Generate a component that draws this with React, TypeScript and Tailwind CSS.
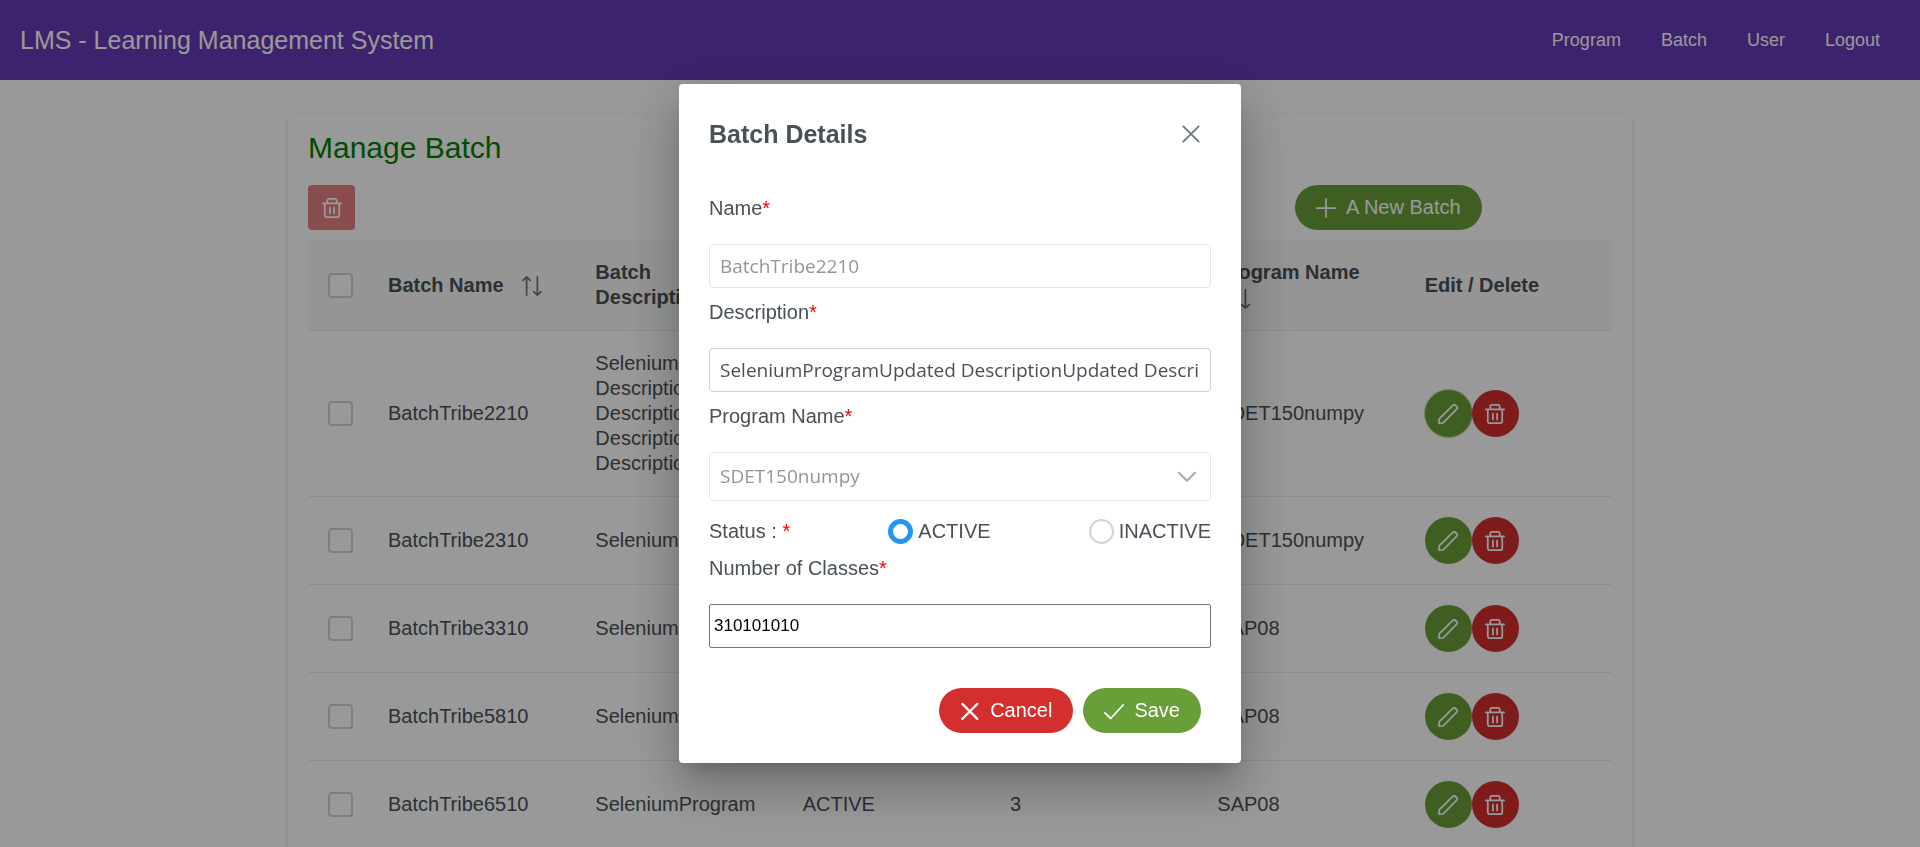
import { useState } from "react";
import type { ReactNode } from "react";

type Batch = {
  name: string;
  description: string;
  status: string;
  classes: string;
  program: string;
};

const batches: Batch[] = [
  {
    name: "BatchTribe2210",
    description:
      "SeleniumProgramUpdated DescriptionUpdated DescriptionUpdated DescriptionUpdated Description",
    status: "ACTIVE",
    classes: "310101010",
    program: "SDET150numpy",
  },
  { name: "BatchTribe2310", description: "SeleniumProgram", status: "ACTIVE", classes: "3", program: "SDET150numpy" },
  { name: "BatchTribe3310", description: "SeleniumProgram", status: "ACTIVE", classes: "3", program: "SAP08" },
  { name: "BatchTribe5810", description: "SeleniumProgram", status: "ACTIVE", classes: "3", program: "SAP08" },
  { name: "BatchTribe6510", description: "SeleniumProgram", status: "ACTIVE", classes: "3", program: "SAP08" },
];

const columns = ["Batch Name", "Batch Description", "Batch Status", "No Of Classes", "Program Name"];

function Icon({ children, className = "size-5" }: { children: ReactNode; className?: string }) {
  return (
    <svg
      viewBox="0 0 20 20"
      fill="none"
      stroke="currentColor"
      strokeWidth="1.75"
      strokeLinecap="round"
      strokeLinejoin="round"
      aria-hidden="true"
      className={`shrink-0 ${className}`}
    >
      {children}
    </svg>
  );
}

const TrashIcon = () => (
  <Icon>
    <path d="M.9 5.4h18.2M2.8 5.4v12a1.8 1.8 0 0 0 1.8 1.8h10.8a1.8 1.8 0 0 0 1.8-1.8v-12M5.3 5.4V2.3A1.4 1.4 0 0 1 6.7.9h6.6a1.4 1.4 0 0 1 1.4 1.4v3.1M7.9 9.6v5.8M12.1 9.6v5.8" />
  </Icon>
);
const PencilIcon = () => (
  <Icon>
    <path d="M.9 19.1l.3-4.3L14.6 1.6a2.2 2.2 0 0 1 3.1 0l.7.7a2.2 2.2 0 0 1 0 3.1L5.2 18.8z" />
  </Icon>
);
const SortIcon = () => (
  <Icon className="ml-[13px] inline-block size-5 align-middle text-[#6c757d]">
    <path d="M4.6 19.1V.9M.9 4.4 4.6.9l3.7 3.5M15.4.9v18.2M11.7 15.6l3.7 3.5 3.7-3.5" />
  </Icon>
);
const PlusIcon = () => (
  <Icon>
    <path d="M10 .9v18.2M.9 10h18.2" />
  </Icon>
);
const CloseIcon = () => (
  <Icon>
    <path d="M2.3 2.3l15.4 15.4M17.7 2.3 2.3 17.7" />
  </Icon>
);
const CancelIcon = () => (
  <Icon>
    <path strokeWidth="2.2" d="M2.3 2.9l15 15M17.3 2.9l-15 15" />
  </Icon>
);
const CheckIcon = () => (
  <Icon>
    <path d="M.9 11.9l5.8 5.6L19.1 4" />
  </Icon>
);
const ChevronIcon = () => (
  <Icon className="size-5 text-[#6c757d]">
    <path strokeWidth="2.2" d="M2 5.8l8 8 8-8" />
  </Icon>
);

const checkbox =
  "block size-[25px] appearance-none rounded border-2 border-[#ced4da] bg-white checked:bg-[#2196f3]";
const pill = "flex h-[45px] items-center gap-2.5 rounded-full px-[21px] text-white";
const round = "flex size-[47px] items-center justify-center rounded-full text-white";
const field = "mt-[23px] block h-11 w-full rounded border px-2.5";
const fieldFont = "font-['Open_Sans','Noto_Sans',sans-serif] text-[19px]";

function Required() {
  return <span className="text-[red]">*</span>;
}

function FieldLabel({ id, children }: { id: string; children: ReactNode }) {
  return (
    <label htmlFor={id} className="mt-3 block">
      {children}
      <Required />
    </label>
  );
}

function BatchTable() {
  return (
    <table className="mt-2.5 w-full table-fixed border-collapse text-left">
      <thead className="bg-[#f8f9fa]">
        <tr className="border-b border-[#e9ecef]">
          <th className="w-[60px] py-5 pl-5">
            <input type="checkbox" aria-label="Select all batches" className={checkbox} />
          </th>
          {columns.map((column) => (
            <th key={column} className="p-5 font-bold">
              {column} <SortIcon />
            </th>
          ))}
          <th className="p-5 font-bold">Edit / Delete</th>
        </tr>
      </thead>
      <tbody>
        {batches.map((batch, index) => (
          <tr key={batch.name} className="border-b border-[#e9ecef]">
            <td className="py-5 pl-5">
              <input type="checkbox" aria-label={`Select ${batch.name}`} className={checkbox} />
            </td>
            <td className="p-5">{batch.name}</td>
            <td className="p-5">{batch.description}</td>
            <td className="p-5">{batch.status}</td>
            <td className="p-5">{batch.classes}</td>
            <td className="p-5">{batch.program}</td>
            <td className="p-5">
              <div className="flex">
                <button
                  type="button"
                  aria-label={`Edit ${batch.name}`}
                  className={`${round} bg-[#689f38] ${index === 0 ? "shadow-[0_0_0_1px_#c2d9af]" : ""}`}
                >
                  <PencilIcon />
                </button>
                <button type="button" aria-label={`Delete ${batch.name}`} className={`${round} bg-[#d32f2f]`}>
                  <TrashIcon />
                </button>
              </div>
            </td>
          </tr>
        ))}
      </tbody>
    </table>
  );
}

function BatchDialog() {
  const [status, setStatus] = useState("ACTIVE");
  const [description, setDescription] = useState(batches[0].description);
  const [classes, setClasses] = useState("310101010");

  const radio = (value: string) => (
    <label className="flex items-center gap-[5px]">
      <input
        type="radio"
        name="status"
        value={value}
        checked={status === value}
        onChange={() => setStatus(value)}
        className="size-[25px] appearance-none rounded-full border-2 border-[#ced4da] bg-white checked:border-[5px] checked:border-[#2196f3]"
      />
      {value}
    </label>
  );

  return (
    <section
      role="dialog"
      aria-modal="true"
      aria-labelledby="dialog-title"
      className="w-[562px] rounded bg-white shadow-[0_14px_19px_-9px_rgba(0,0,0,0.2),0_30px_48px_4px_rgba(0,0,0,0.14),0_11px_58px_10px_rgba(0,0,0,0.12)]"
    >
      <header className="flex items-center justify-between p-[30px]">
        <h2 id="dialog-title" className="text-[25px] font-bold">
          Batch Details
        </h2>
        <button type="button" aria-label="Close" className="flex size-10 items-center justify-center text-[#6c757d]">
          <CloseIcon />
        </button>
      </header>
      <form className="flow-root px-[30px]">
        <FieldLabel id="name">Name</FieldLabel>
        <input
          id="name"
          disabled
          value={batches[0].name}
          className={`${field} ${fieldFont} border-[#ced4da] opacity-60`}
        />
        <FieldLabel id="description">Description</FieldLabel>
        <input
          id="description"
          value={description}
          onChange={(event) => setDescription(event.target.value)}
          className={`${field} ${fieldFont} border-[#ced4da]`}
        />
        <FieldLabel id="program">Program Name</FieldLabel>
        <div className="mt-[23px] grid items-center opacity-60">
          <select
            id="program"
            disabled
            className={`col-start-1 row-start-1 h-[49px] w-full appearance-none rounded border border-[#ced4da] px-2.5 opacity-100 ${fieldFont}`}
          >
            <option>SDET150numpy</option>
          </select>
          <span className="pointer-events-none col-start-1 row-start-1 mr-3.5 justify-self-end">
            <ChevronIcon />
          </span>
        </div>
        <fieldset className="mt-[18px] flex items-center justify-between">
          <span>
            Status : <Required />
          </span>
          {radio("ACTIVE")}
          {radio("INACTIVE")}
        </fieldset>
        <FieldLabel id="classes">Number of Classes</FieldLabel>
        <input
          id="classes"
          value={classes}
          onChange={(event) => setClasses(event.target.value)}
          className="mt-[23px] block h-11 w-full rounded-xs border border-[#767676] px-1 text-[17px] text-black"
        />
      </form>
      <footer className="flex justify-end gap-2.5 px-10 pt-10 pb-[30px]">
        <button type="button" className={`${pill} bg-[#d32f2f]`}>
          <CancelIcon />
          Cancel
        </button>
        <button type="button" className={`${pill} bg-[#689f38]`}>
          <CheckIcon />
          Save
        </button>
      </footer>
    </section>
  );
}

export default function App() {
  return (
    <div className="h-screen overflow-hidden bg-white font-['Liberation_Sans',Arial,sans-serif] text-[20px] leading-[25px] text-[#495057]">
      <header className="flex h-20 items-center justify-between bg-[#673ab7] px-5 text-white">
        <h1 className="text-[25px]">LMS - Learning Management System</h1>
        <nav className="flex text-[18px]">
          {["Program", "Batch", "User", "Logout"].map((item) => (
            <a key={item} href="#" className="px-5">
              {item}
            </a>
          ))}
        </nav>
      </header>
      <main className="mx-auto mt-[35px] w-[70%] rounded-[5px] bg-white p-5 shadow-[0_2px_1px_-1px_rgba(0,0,0,0.2),0_1px_1px_0_rgba(0,0,0,0.14),0_1px_4px_0_rgba(0,0,0,0.12)]">
        <h2 className="text-[30px] text-[green]">Manage Batch</h2>
        <div className="mt-[25px] flex items-center justify-between">
          <button
            type="button"
            disabled
            aria-label="Delete selected batches"
            className="flex h-[45px] w-[47px] items-center justify-center rounded bg-[#d32f2f] text-white opacity-60"
          >
            <TrashIcon />
          </button>
          <button type="button" className={`${pill} mr-[10%] bg-[#689f38]`}>
            <PlusIcon />A New Batch
          </button>
        </div>
        <BatchTable />
      </main>
      <div className="fixed inset-0 flex items-center justify-center bg-black/40">
        <BatchDialog />
      </div>
    </div>
  );
}
